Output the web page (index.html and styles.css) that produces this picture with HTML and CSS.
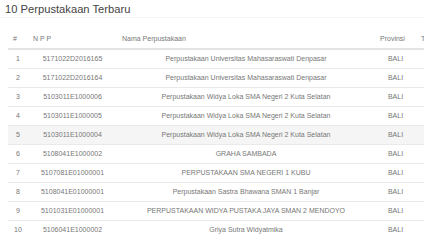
FILE: index.html
```html
<!DOCTYPE html>
<html>
<head>
<meta charset="utf-8">
<link rel="stylesheet" href="styles.css">
</head>
<body>
<div class="box">
  <div class="box-header"><h3 class="box-title">10 Perpustakaan Terbaru</h3></div>
  <div class="box-body">
    <table class="table">
      <colgroup>
        <col class="c-no"><col class="c-npp"><col class="c-nama"><col class="c-prov"><col class="c-tgl">
      </colgroup>
      <thead>
        <tr><th>#</th><th>N P P</th><th>Nama Perpustakaan</th><th>Provinsi</th><th>Tanggal</th></tr>
      </thead>
      <tbody>
        <tr><td>1</td><td>5171022D2016165</td><td>Perpustakaan Universitas Mahasaraswati Denpasar</td><td>BALI</td><td></td></tr>
        <tr><td>2</td><td>5171022D2016164</td><td>Perpustakaan Universitas Mahasaraswati Denpasar</td><td>BALI</td><td></td></tr>
        <tr><td>3</td><td>5103011E1000006</td><td>Perpustakaan Widya Loka SMA Negeri 2 Kuta Selatan</td><td>BALI</td><td></td></tr>
        <tr><td>4</td><td>5103011E1000005</td><td>Perpustakaan Widya Loka SMA Negeri 2 Kuta Selatan</td><td>BALI</td><td></td></tr>
        <tr class="hover"><td>5</td><td>5103011E1000004</td><td>Perpustakaan Widya Loka SMA Negeri 2 Kuta Selatan</td><td>BALI</td><td></td></tr>
        <tr><td>6</td><td>5108041E1000002</td><td>GRAHA SAMBADA</td><td>BALI</td><td></td></tr>
        <tr><td>7</td><td>5107081E01000001</td><td>PERPUSTAKAAN SMA NEGERI 1 KUBU</td><td>BALI</td><td></td></tr>
        <tr><td>8</td><td>5108041E01000001</td><td>Perpustakaan Sastra Bhawana SMAN 1 Banjar</td><td>BALI</td><td></td></tr>
        <tr><td>9</td><td>5101031E01000001</td><td>PERPUSTAKAAN WIDYA PUSTAKA JAYA SMAN 2 MENDOYO</td><td>BALI</td><td></td></tr>
        <tr><td>10</td><td>5106041E1000002</td><td>Griya Sutra Widyatmika</td><td>BALI</td><td></td></tr>
      </tbody>
    </table>
  </div>
</div>
</body>
</html>
```

FILE: styles.css
```css
html, body {
  margin: 0;
  padding: 0;
  background: #fff;
  overflow: hidden;
}
body {
  font-family: "Liberation Sans", Arial, sans-serif;
  color: #555;
}
.box-header {
  padding: 3px 5px 2px;
  border-bottom: 1px solid #f4f4f4;
}
.box-title {
  margin: 0;
  font-size: 11.2px;
  line-height: 12px;
  font-weight: normal;
  color: #444;
}
.box-body {
  padding: 12px 0 0 8px;
}
.table {
  border-collapse: collapse;
  table-layout: fixed;
  width: 480px;
  font-size: 7px;
  line-height: 10px;
}
.c-no { width: 20px; }
.c-npp { width: 89px; }
.c-nama { width: 258px; }
.c-prov { width: 41px; }
.c-tgl { width: 72px; }
.table th {
  text-align: left;
  font-weight: normal;
  padding: 4px 5px;
  border-bottom: 2px solid #e4e4e4;
  color: #777;
  white-space: nowrap;
}
.table td {
  text-align: center;
  padding: 4px 5px;
  border-top: 1px solid #eaeaea;
  color: #777;
  white-space: nowrap;
}
.table tbody tr:first-child td {
  border-top: 0;
}
.table tr.hover td {
  background: #f5f5f5;
}
```
